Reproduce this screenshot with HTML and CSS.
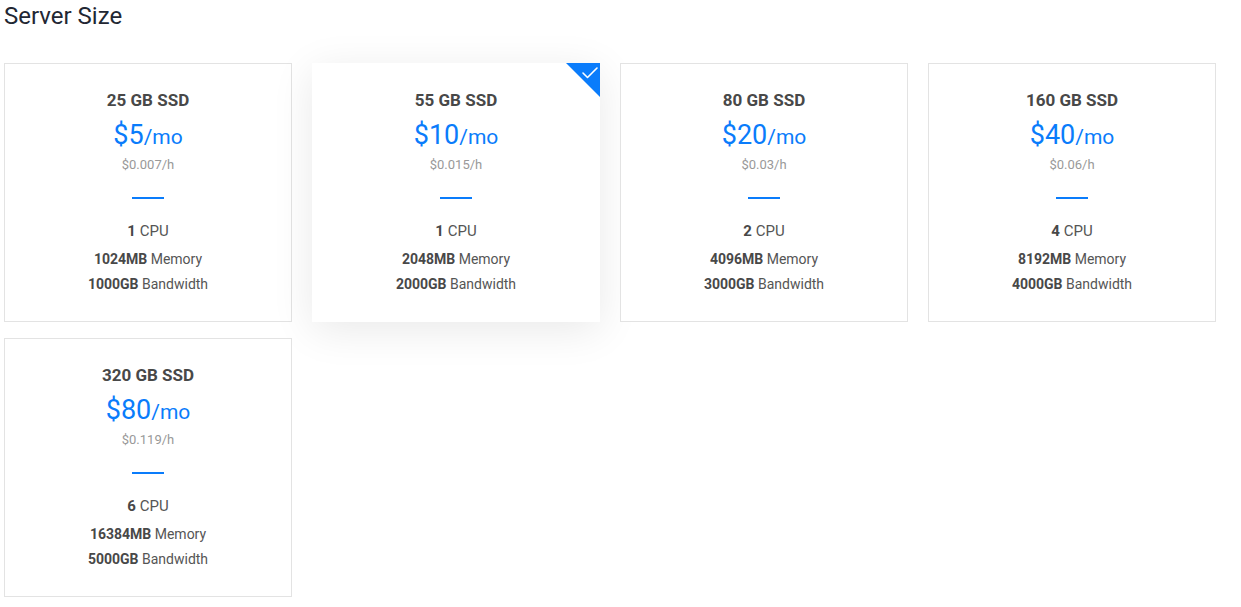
FILE: index.html
```html
<!DOCTYPE html>
<html lang="en">
<head>
<meta charset="utf-8">
<title>Server Size</title>
<link rel="stylesheet" href="styles.css">
</head>
<body>
<section class="sizes">
  <h2 class="sizes-title">Server Size</h2>
  <div class="size-grid">
    <div class="size-card">
      <div class="size-name">25 GB SSD</div>
      <div class="size-price">$5<span class="per">/mo</span></div>
      <div class="size-hourly">$0.007/h</div>
      <div class="size-rule"></div>
      <div class="spec spec-cpu"><b>1</b> CPU</div>
      <div class="spec"><b>1024MB</b> Memory</div>
      <div class="spec"><b>1000GB</b> Bandwidth</div>
    </div>
    <div class="size-card is-selected">
      <span class="corner-check">
        <svg width="34" height="34" viewBox="0 0 34 34"><polygon points="0,0 34,0 34,34" fill="#0a7cfb"/><polyline points="17,10 21.5,14.5 31,5" fill="none" stroke="#fff" stroke-width="1.6" stroke-linecap="round" stroke-linejoin="round"/></svg>
      </span>
      <div class="size-name">55 GB SSD</div>
      <div class="size-price">$10<span class="per">/mo</span></div>
      <div class="size-hourly">$0.015/h</div>
      <div class="size-rule"></div>
      <div class="spec spec-cpu"><b>1</b> CPU</div>
      <div class="spec"><b>2048MB</b> Memory</div>
      <div class="spec"><b>2000GB</b> Bandwidth</div>
    </div>
    <div class="size-card">
      <div class="size-name">80 GB SSD</div>
      <div class="size-price">$20<span class="per">/mo</span></div>
      <div class="size-hourly">$0.03/h</div>
      <div class="size-rule"></div>
      <div class="spec spec-cpu"><b>2</b> CPU</div>
      <div class="spec"><b>4096MB</b> Memory</div>
      <div class="spec"><b>3000GB</b> Bandwidth</div>
    </div>
    <div class="size-card">
      <div class="size-name">160 GB SSD</div>
      <div class="size-price">$40<span class="per">/mo</span></div>
      <div class="size-hourly">$0.06/h</div>
      <div class="size-rule"></div>
      <div class="spec spec-cpu"><b>4</b> CPU</div>
      <div class="spec"><b>8192MB</b> Memory</div>
      <div class="spec"><b>4000GB</b> Bandwidth</div>
    </div>
    <div class="size-card">
      <div class="size-name">320 GB SSD</div>
      <div class="size-price">$80<span class="per">/mo</span></div>
      <div class="size-hourly">$0.119/h</div>
      <div class="size-rule"></div>
      <div class="spec spec-cpu"><b>6</b> CPU</div>
      <div class="spec"><b>16384MB</b> Memory</div>
      <div class="spec"><b>5000GB</b> Bandwidth</div>
    </div>
  </div>
</section>
</body>
</html>
```
FILE: styles.css
```css
* { box-sizing: border-box; }
html, body { margin: 0; padding: 0; background: #fff; }
body {
  font-family: Roboto, "Liberation Sans", Arial, sans-serif;
  color: #444;
}
.sizes { padding: 0 0 0 4px; }
.sizes-title {
  margin: 0 0 31px;
  font-size: 24px;
  line-height: 32px;
  font-weight: 400;
  color: #222733;
}
.size-grid {
  display: grid;
  grid-template-columns: repeat(4, 288px);
  column-gap: 20px;
  row-gap: 16px;
}
.size-card {
  position: relative;
  height: 259px;
  border: 1px solid #e3e3e3;
  background: #fff;
  padding: 26px 10px 0;
  text-align: center;
}
.size-card.is-selected {
  border-color: #fff;
  box-shadow: 0 8px 40px rgba(0, 0, 0, 0.09);
}
.corner-check {
  position: absolute;
  top: -1px;
  right: -1px;
  width: 34px;
  height: 34px;
  display: block;
}
.corner-check svg { display: block; }
.size-name {
  font-size: 17px;
  line-height: 20px;
  font-weight: 700;
  color: #484848;
}
.size-price {
  margin-top: 9px;
  font-size: 27px;
  line-height: 32px;
  color: #0a7cfb;
}
.size-price .per { font-size: 21px; }
.size-hourly {
  margin-top: 3px;
  font-size: 13px;
  line-height: 18px;
  color: #999;
}
.size-rule {
  width: 32px;
  height: 2px;
  margin: 23px auto 0;
  background: #0a7cfb;
}
.spec {
  font-size: 14px;
  line-height: 25px;
  color: #555;
}
.spec b { font-weight: 700; color: #484848; }
.spec-cpu {
  margin-top: 21px;
  margin-bottom: 5px;
  font-size: 15px;
  line-height: 22px;
}
```
